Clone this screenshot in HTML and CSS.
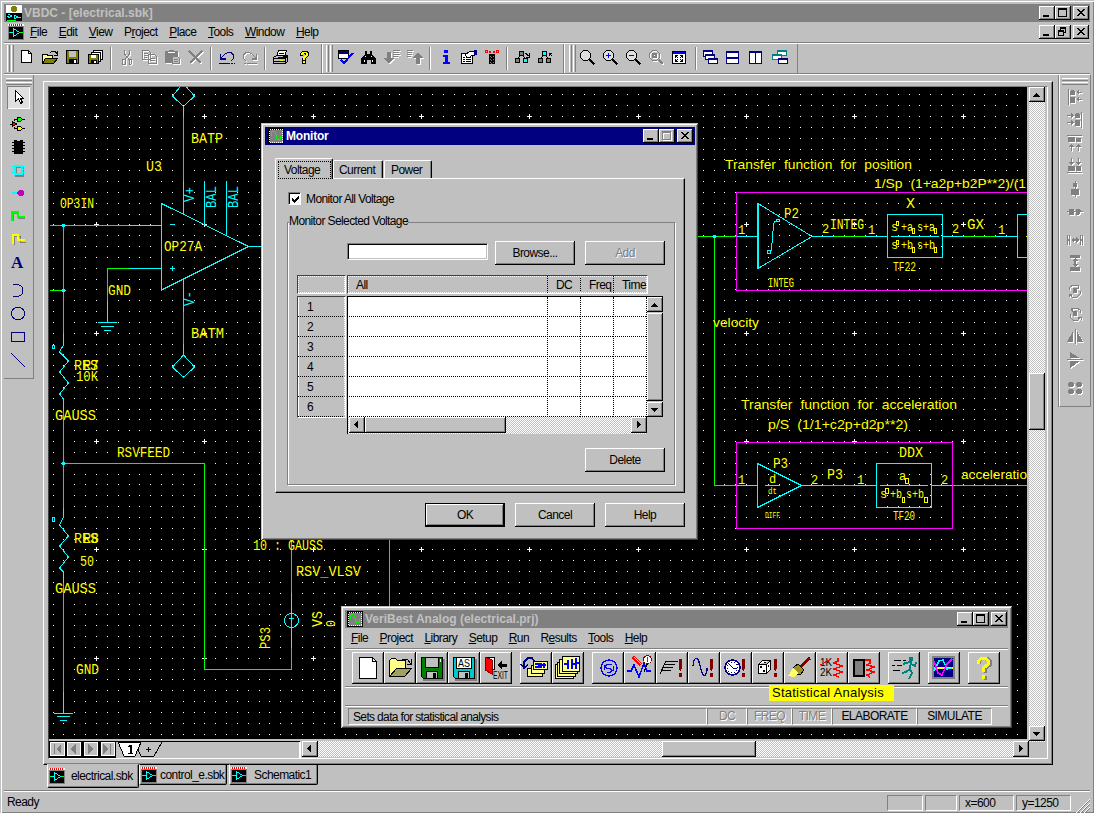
FILE: index.html
```html
<!DOCTYPE html>
<html lang="en">
<head>
<meta charset="utf-8">
<title>VBDC - [electrical.sbk]</title>
<link rel="stylesheet" href="styles.css">
</head>
<body>
<svg class="defs" width="0" height="0">
  <symbol id="min" viewBox="0 0 16 14"><path d="M4 9h6v2H4z"/></symbol>
  <symbol id="max" viewBox="0 0 16 14"><path fill-rule="evenodd" d="M3 2h9v9H3zM4 4v6h7V4z"/></symbol>
  <symbol id="restore" viewBox="0 0 16 14"><path fill-rule="evenodd" d="M5 2h6v6H9v3H3V5h2zM6 4v1h3v2h1V4zM4 7v3h4V7z"/></symbol>
  <symbol id="close" viewBox="0 0 16 14"><path d="M4 3h2v1h1v1h2V4h1V3h2v1h-1v1h-1v1H9v1h1v1h1v1h1v1h-2V9H9V8H7v1H6v1H4V9h1V8h1V7h1V6H6V5H5V4H4z"/></symbol>
  <symbol id="up" viewBox="0 0 14 14"><path d="M6 5h1v1h1v1h1v1h1v1H3V8h1V7h1V6h1z"/></symbol>
  <symbol id="down" viewBox="0 0 14 14"><path d="M3 5h7v1H9v1H8v1H7v1H6V8H5V7H4V6H3z"/></symbol>
  <symbol id="left" viewBox="0 0 14 14"><path d="M8 3v7H7V9H6V8H5V7H4V6h1V5h1V4h1V3z"/></symbol>
  <symbol id="right" viewBox="0 0 14 14"><path d="M5 3v7h1V9h1V8h1V7h1V6H8V5H7V4H6V3z"/></symbol>
  <symbol id="sch" viewBox="0 0 16 16"><path d="M0 0h16v16H0z" fill="#808080"/><path d="M0 0h16v2H0z" fill="#fff"/><path d="M1 0h1v2H1zM3 0h1v2H3zM5 0h1v2H5zM7 0h1v2H7zM9 0h1v2H9zM11 0h1v2h-1zM13 0h1v2h-1z" fill="#f00"/><path d="M1 3h14v12H1z"/><path d="M1 8.500h4M12 8.500h3" stroke="#0f0"/><path d="M5.500 4.500v8l6-4zM2 8.500h3" stroke="#0ff" fill="none"/></symbol>
  <symbol id="wave" viewBox="0 0 16 16"><path d="M0 0h16v16H0z" fill="#000"/><path d="M1.500 1.500h13v13h-13z" fill="#808080" stroke="#fff" stroke-dasharray="1 1"/><path d="M3 4h1v4H3zM4 3h3v1H4zM7 4h1v3H7zM8 7h1v4H8zM9 11h3v1H9zM12 8h1v3h-1z" fill="#0f0"/></symbol>
  <symbol id="glass" viewBox="0 0 16 16"><path d="M3.500.5h4l3 3v4l-3 3h-4l-3-3v-4z" fill="#dfdfdf" stroke="#000"/><path d="M9.500 9.500l5 5" stroke="#000" stroke-width="2.500"/></symbol>
</svg>

<div class="app">
  <header class="titlebar">
    <svg class="ic16" viewBox="0 0 16 16"><path d="M0 0h16v8H0z" fill="#fff"/><path d="M0 8h16v8H0z"/><path d="M6 1h4v1h1v4h-1v1H6V6H5V2h1z" fill="#808000"/><path d="M2 9l4 2-4 2M8 10l4 2-4 2zM1 11h2M12 12h3" stroke="#0ff" fill="none"/><path d="M1 15h9" stroke="#0f0"/></svg>
    <span class="cap main-cap">VBDC - [electrical.sbk]</span>
    <span class="wbtns"><button class="wb"><svg><use href="#min"/></svg></button><button class="wb"><svg><use href="#max"/></svg></button><button class="wb x"><svg><use href="#close"/></svg></button></span>
  </header>
  <nav class="menubar">
    <svg class="ic16" viewBox="0 0 16 16"><use href="#sch"/></svg>
    <span class="items"><span><u>F</u>ile</span><span><u>E</u>dit</span><span><u>V</u>iew</span><span>P<u>r</u>oject</span><span><u>P</u>lace</span><span><u>T</u>ools</span><span><u>W</u>indow</span><span><u>H</u>elp</span></span>
    <span class="wbtns"><button class="wb"><svg><use href="#min"/></svg></button><button class="wb"><svg><use href="#restore"/></svg></button><button class="wb x"><svg><use href="#close"/></svg></button></span>
  </nav>

  <div class="toolbars">
    <div class="tb tb1"><i class="grip"></i>
      <b><svg viewBox="0 0 16 16"><path d="M2.500.5h7l3 3v9h-10z" fill="#fff" stroke="#000"/><path d="M9.500.5v3h3" fill="none" stroke="#000"/></svg></b>
      <b><svg viewBox="0 0 16 16"><path d="M.5 13.500v-9h5v1h5v3" fill="#ff8" stroke="#000"/><path d="M.5 13.500l3-5h12l-4 5z" fill="#808000" stroke="#000"/><path d="M8 3l2-2h3l2 3M15 1v4h-3" fill="none" stroke="#000"/></svg></b>
      <b><svg viewBox="0 0 16 16"><path d="M1.500.5h12v13h-12z" fill="#808000" stroke="#000"/><path d="M4 1h7v6H4z" fill="#c0c0c0"/><path d="M4 9h8v5H4z"/><path d="M9 10h2v3H9z" fill="#fff"/></svg></b>
      <b><svg viewBox="0 0 16 16"><path d="M5.500.5h9v9h-9z" fill="#fff" stroke="#000"/><path d="M3.500 2.500h9v9h-9z" fill="#fff" stroke="#000"/><path d="M.5 4.500h10v9H.500z" fill="#808000" stroke="#000"/><path d="M3 5h5v3H3z" fill="#fff"/><path d="M3 10h6v4H3z"/><path d="M6 11h2v2H6z" fill="#fff"/></svg></b>
      <i class="sep"></i>
      <b class="dis"><svg viewBox="0 0 16 16"><path d="M5.500 0v4l5 6M10.500 0v4l-5 6M4 9h2v5H3v-4zM10 9h2l1 2-1 3h-2z" fill="none" stroke="#808080"/></svg></b>
      <b class="dis"><svg viewBox="0 0 16 16"><path d="M.5.500h6l2 2v7h-8zM6.500 4.500h6l2 2v7h-8zM2 3.500h4M2 5.500h4M2 7.500h3M8 8.500h5M8 10.500h5" fill="none" stroke="#808080"/></svg></b>
      <b class="dis"><svg viewBox="0 0 16 16"><path d="M0 1h4V0h5v1h4v5H7v7H0z" fill="#808080"/><path d="M3 2.500h7" stroke="#fff"/><path d="M7.500 6.500h5l2 2v5h-7zM9 9.500h4M9 11.500h4" fill="#c0c0c0" stroke="#808080"/></svg></b>
      <b class="dis"><svg viewBox="0 0 16 16"><path d="M1 1l12 12M14 1L2 13" stroke="#808080" stroke-width="2" fill="none"/></svg></b>
      <i class="sep"></i>
      <b><svg viewBox="0 0 16 16"><path d="M1.500 4v5h5M2 8l4-4 3-1.500h3l2.500 3v3L12 11" fill="none" stroke="#000080" stroke-width="1.300"/><path d="M0 13.500h11m1 0h2m1 0h1" stroke="#000080"/></svg></b>
      <b class="dis"><svg viewBox="0 0 16 16"><path d="M14.500 4v5h-5M14 8l-4-4-3-1.500H4L1.500 5.500v3L4 11M2 13.500h2m1 0h10" fill="none" stroke="#808080" stroke-width="1.300"/></svg></b>
      <i class="sep"></i>
      <b><svg viewBox="0 0 16 16"><path d="M5.500.5h8l-2 6h-8z" fill="#fff" stroke="#000"/><path d="M.5 7.500l3-2h11v6l-3 2H.500z" fill="#c0c0c0" stroke="#000"/><path d="M0 8.500h12l3-3M0 11.500h12M6 3.500h5M6 5h4M12 8v6" stroke="#000"/><path d="M7 10h3" stroke="#ff0"/></svg></b>
      <b><svg viewBox="0 0 16 16"><path d="M4 6V3l2-2h5l2 2v3l-3 2v3H6V8l3-2V4H7v2zM6 10h4v4H6z"/><path d="M5 5V3l1-1h4l2 1v2L9 8v2H7V7l3-2V4L9 3H8L7 4v1zM7 11h2v2H7z" fill="#ff0"/></svg></b>
    </div>
    <div class="tb tb2"><i class="grip"></i>
      <b><svg viewBox="0 0 16 16"><path d="M.5.500h10v8H.500z" fill="#fff" stroke="#000"/><path d="M1 1h9v3H1z" fill="#000080"/><path d="M3 10l3 3 9-10" fill="none" stroke="#00f" stroke-width="2"/></svg></b>
      <b><svg viewBox="0 0 16 16"><path d="M4 1h2v3h3V1h2v3l4 5v5h-5v-4H6v4H0V9l4-5z"/><path d="M3 10v2M11 10v2M4 6v1M10 6v1" stroke="#fff"/></svg></b>
      <b class="dis"><svg viewBox="0 0 16 16"><path d="M3 2h4v6h3l-5 6-5-6h3z" fill="#808080"/><path d="M9 .5h7M9 2.500h6M9 4.500h7M9 6.500h5" stroke="#808080"/></svg></b>
      <b class="dis"><svg viewBox="0 0 16 16"><path d="M9 14h4V8h3l-5-6-5 6h3z" fill="#808080"/><path d="M0 .5h6M0 2.500h5M0 4.500h5M0 6.500h4" stroke="#808080"/></svg></b>
      <i class="sep"></i>
      <b><svg viewBox="0 0 16 16"><path d="M6 0h4v3H6zM5 5h5v7h2v2H5v-2h2V7H5z" fill="#00f"/></svg></b>
      <b><svg viewBox="0 0 16 16"><path d="M.5 3.500h11v10H.500z" fill="#fff" stroke="#000"/><path d="M2 7.500h2m1 0h5M2 9.500h2m1 0h5M2 11.500h2m1 0h5" stroke="#000"/><path d="M4 5l5-4h5v4l-4 1-2 2-2-1z" fill="#fff" stroke="#000"/><path d="M13 0h3v5h-3z" fill="#000080"/></svg></b>
      <b><svg viewBox="0 0 16 16"><path d="M6 4h4v10H6z" fill="#808080"/><path d="M5.500 14V4h5v10M6 5l4 3-4 3 4 3M10 5L6 8l4 3-4 3" fill="none" stroke="#000"/><path d="M1.500.500h2v2h-2zM12.500.500h2v2h-2z" fill="none" stroke="#f00"/><path d="M5 1h2v2H5zM9 1h2v2H9z" fill="#f00"/></svg></b>
      <i class="sep"></i>
      <b><svg viewBox="0 0 16 16"><path d="M4.500 1.500h4v4h-4zM.5 8.500h4v4h-4z" fill="#808080" stroke="#000"/><path d="M8.500 8.500h4v4h-4z" fill="#0ff" stroke="#000"/><path d="M5 6L3 8M8 6l2 2M10 3l4 3M14 3v4h-3" stroke="#000" fill="none"/></svg></b>
      <b><svg viewBox="0 0 16 16"><path d="M4.500 1.500h4v4h-4z" fill="#0ff" stroke="#000"/><path d="M.5 8.500h4v4h-4zM8.500 8.500h4v4h-4z" fill="#808080" stroke="#000"/><path d="M5 6L3 8M8 6l2 2M14 6l-3-3M11 6V3h3" stroke="#000" fill="none"/></svg></b>
    </div>
    <div class="tb tb3"><i class="grip"></i>
      <b><svg viewBox="0 0 16 16"><use href="#glass"/></svg></b>
      <b><svg viewBox="0 0 16 16"><use href="#glass"/><path d="M3 5.500h5M5.500 3v5" stroke="#00f" stroke-width="1.500"/></svg></b>
      <b><svg viewBox="0 0 16 16"><use href="#glass"/><path d="M3 5.500h5" stroke="#00f" stroke-width="1.500"/></svg></b>
      <b class="dis"><svg viewBox="0 0 16 16"><path d="M3.500.5h4l3 3v4l-3 3h-4l-3-3v-4z" fill="none" stroke="#808080"/><path d="M4 4h3v3H4z" fill="none" stroke="#808080" stroke-width="2"/><path d="M10 10l4 4" stroke="#808080" stroke-width="2"/></svg></b>
      <b><svg viewBox="0 0 16 16"><path d="M.5 1.500h13v12H.5z" fill="#fff" stroke="#000"/><path d="M1 2h12v2H1z" fill="#00f"/><path d="M3.500 8V5.500H6M3.500 5.500L6 8M10.500 8V5.500H8M10.500 5.500L8 8M3.500 9v2.500H6M3.500 11.500L6 9M10.500 9v2.500H8M10.500 11.500L8 9" stroke="#000" fill="none"/></svg></b>
      <i class="sep"></i>
      <b><svg viewBox="0 0 16 16"><g fill="#fff" stroke="#000080"><path d="M.5.500h9v6h-9z"/><path d="M2.500 4.500h9v5h-9z"/><path d="M5.500 8.500h9v5h-9z"/></g><path d="M0 1h10M2 5h10M5 9h10" stroke="#000080" stroke-width="2"/></svg></b>
      <b><svg viewBox="0 0 16 16"><path d="M.5 1.500h12v6H.5zM.5 7.500h12v6H.5z" fill="#fff" stroke="#000080"/><path d="M0 2h13M0 8h13" stroke="#000080" stroke-width="2"/></svg></b>
      <b><svg viewBox="0 0 16 16"><path d="M.5 1.500h6v12h-6zM6.500 1.500h6v12h-6z" fill="#fff" stroke="#000080"/><path d="M0 2h13" stroke="#000080" stroke-width="2"/></svg></b>
      <b><svg viewBox="0 0 16 16"><g fill="#fff" stroke="#008080"><path d="M5.500.500h9v5h-9z"/><path d="M.5 4.500h9v5h-9z"/></g><path d="M5 1h10M0 5h10" stroke="#008080" stroke-width="2"/><path d="M6.500 8.500h9v5h-9z" fill="#fff" stroke="#000080"/><path d="M6 9h10" stroke="#000080" stroke-width="2"/></svg></b>
    </div>
  </div>

  <div class="workspace">
    <aside class="dock dleft"><i class="vgrip"></i><i class="vgrip"></i>
      <b class="pressed"><svg viewBox="0 0 16 16"><path d="M5.500 1.500v11l3-3 2 5 2-1-2-4h3z" fill="#fff" stroke="#000"/></svg></b>
      <b class="g3"><svg viewBox="0 0 16 16"><path d="M7.500 1.500h3l2 2-2 2h-3z" fill="#0f0" stroke="#000"/><path d="M2.500 5.500v5l4-2.500z" fill="#f00" stroke="#000"/><path d="M7.500 10.500h3l2 2-2 2h-3z" fill="#ff0" stroke="#000"/><path d="M13 3.500h2M13 12.500h2M0 8.500h2M4 3.500h3M4 3v2M4 12.500h3M4 11v2" stroke="#000"/></svg></b>
      <b><svg viewBox="0 0 16 16"><path d="M4 1h9v14H4z"/><path d="M2 3.500h13M2 6.500h13M2 9.500h13M2 12.500h13" stroke="#000"/><path d="M7 1h3v1H7z" fill="#c0c0c0"/></svg></b>
      <b><svg viewBox="0 0 16 16"><path d="M5 4h7v9H5z" fill="none" stroke="#808080" stroke-width="2" transform="translate(1 1)"/><path d="M5 4h7v8H5z" fill="none" stroke="#0ff" stroke-width="2"/><path d="M1 4.500h3M1 7.500h3M1 10.500h3M12 4.500h3M12 7.500h3M12 10.500h3" stroke="#0ff" stroke-width="1.500"/></svg></b>
      <b><svg viewBox="0 0 16 16"><path d="M2 8h6" stroke="#0ff" stroke-width="2"/><path d="M9 5h3l2 2v2l-2 2H9L7 9V7z" fill="#c000c0"/></svg></b>
      <b><svg viewBox="0 0 16 16"><path d="M3 13V5h5v5h7" fill="none" stroke="#808080"/><path d="M2 13V4h6v5h7" fill="none" stroke="#0f0" stroke-width="1.500"/></svg></b>
      <b><svg viewBox="0 0 16 16"><path d="M4 14V5h6v6h6" fill="none" stroke="#808080"/><path d="M3 13V4h5v5h7" fill="none" stroke="#ff0" stroke-width="2"/></svg></b>
      <b class="letter">A</b>
      <b class="g4"><svg viewBox="0 0 16 16"><path d="M3 1.500h4c8 1 8 11 0 12H3" fill="none" stroke="#000080"/></svg></b>
      <b><svg viewBox="0 0 16 16"><circle cx="8" cy="7.500" r="6.500" fill="none" stroke="#000080"/></svg></b>
      <b><svg viewBox="0 0 16 16"><path d="M1.500 3.500h13v9h-13z" fill="none" stroke="#000080"/></svg></b>
      <b><svg viewBox="0 0 16 16"><path d="M1 1l14 14" stroke="#000080"/></svg></b>
    </aside>

    <div class="mdi-col">
      <div class="mdi">
        <div class="view">
          <svg class="schematic" viewBox="49 87 978 652">
            <path id="grid" fill="#fff"/>
            <g class="w g">
              <path d="M183.500 117v64M50 225.500h79M63.500 225v108M50 290.500h14M107.500 301v-32.500h22M183.500 312v32M63.500 410v98M63.500 583v109M63.500 463.500h141v206h87V648M291.500 593v-53M389.500 540v67M698 236.500h38M714.500 236v249.500h22M834 236.500h32M964 236.500h32M823 485.500h32M952 485.500h76"/>
            </g>
            <g class="w c">
              <path d="M180 87L172.500 96l11 10.500 11-10.500-8-9M183.500 106v11M183.500 181v33M161.500 203.500l87 43-87 43.500zM248 246.500h14M204.500 181v44M226.500 181v55M129 225.500h32M129 268.500h32M107.500 301v21M98 322.500h19M101 326.500h13M104 330.500h7M183.500 279v33M183.500 344v11l11 12-11 10.500-11-10.500 11-12M170 224.500h5M170 268.500h5M172.500 266v5M52.500 345.500h2v3h-2z"/>
              <path d="M63.500 333v12l-4 7 9 9-9 11 9 11-9 11 4 5v12M63.500 508v9l-4 8 9 11-9 10 9 11-9 11 4 4v11M63.500 692v21M54 713.500h19M57 716.500h13M60 720.500h7M52.500 517.500h2v4h-2zM291.500 593v55M289 618.500h5M736 236.500h22M811 236.500h23M866 236.500h21M887.500 214.500h55v43h-55zM891 236.500h48M942 236.500h22M996 236.500h21M1028 214.500h-10.500v43H1028M758 203.500l54 33-54 32"/>
              <path d="M758 203v66" stroke-width="2"/>
              <path d="M776.500 219.500h3v2h-3zM767.500 250.500h3v3h-3zM776 221q-3 0-3 10l-1.500 18q0 2-2 2M736 485.500h22M757.500 463.500l44 22-44 22zM765 485.500h15M801 485.500h22M855 485.500h21M876.500 463.500h55v44h-55zM880 485.500h48M931 485.500h21"/>
              <circle cx="291.500" cy="620.500" r="7"/>
            </g>
            <path class="w m" d="M1028 192.500H736.500v98H1028M736.500 442.500h216v86h-216z"/>
            <path fill="#0ff" d="M62 224h3v3h-3zM61 225h5v1h-5zM62 289h3v3h-3zM61 290h5v1h-5zM62 462h3v3h-3zM61 463h5v1h-5zM713 235h3v3h-3zM712 236h5v1h-5z"/>
            <g class="s">
              <text x="191" y="143" textLength="32">BATP</text><text x="146" y="171" textLength="16">U3</text><text x="60" y="208" textLength="34">OP3IN</text><text x="164" y="251" textLength="38">OP27A</text><text x="108" y="295" textLength="23">GND</text><text x="191" y="338" textLength="33">BATM</text>
              <text x="74" y="370" textLength="24">RES</text><text x="83" y="370" textLength="16">R7</text><text x="76" y="381" textLength="22">10K</text><text x="55" y="420" textLength="41">GAUSS</text><text x="117" y="457" textLength="53">RSVFEED</text><text x="74" y="543" textLength="24">RES</text><text x="83" y="543" textLength="16">R8</text><text x="80" y="566" textLength="14">50</text><text x="55" y="593" textLength="41">GAUSS</text><text x="76" y="674" textLength="23">GND</text><text x="253" y="550" textLength="70">10 : GAUSS</text><text x="296" y="576" textLength="65">RSV_VLSV</text>
              <text transform="translate(322 627)rotate(-90)" textLength="16">VS</text><text transform="translate(335 627)rotate(-90)" textLength="7" font-size="13">0</text><text transform="translate(270 649)rotate(-90)" textLength="22">PS3</text>
              <text x="906" y="208" textLength="9">X</text><text x="784" y="218" textLength="15">P2</text><text x="830" y="229" textLength="34">INTEG</text><text x="967" y="229" textLength="17">GX</text>
              <text x="899" y="457" textLength="24">DDX</text><text x="773" y="468" textLength="15">P3</text><text x="827" y="479" textLength="16">P3</text>
            </g>
            <g class="s note">
              <text x="725" y="169" textLength="187">Transfer function for position</text><text x="874" y="188" textLength="152">1/Sp (1+a2p+b2P**2)/(1</text><text x="713" y="327" textLength="46">velocity</text><text x="741" y="409" textLength="216">Transfer function for acceleration</text><text x="768" y="429" textLength="140">p/S (1/1+c2p+d2p**2)</text><text x="961" y="479" textLength="66">acceleratio</text>
            </g>
            <g class="s small">
              <text x="738" y="234">1</text><text x="822" y="233">2</text><text x="868" y="234">1</text><text x="952" y="233">2</text><text x="998" y="234">1</text><text x="738" y="484">1</text><text x="811" y="484">2</text><text x="857" y="484">1</text><text x="941" y="484">2</text>
              <text x="893" y="271" textLength="23">TF22</text><text x="893" y="520" textLength="22">TF20</text><text x="768" y="287" textLength="26">INTEG</text><text x="765" y="518" textLength="15" class="tiny">DIFF</text><text x="769" y="483">d</text><text x="768" y="494" textLength="9" class="tiny">dt</text>
              <text x="891" y="231">s</text><text x="901" y="231" textLength="12">+a</text><text x="917" y="231" textLength="18">s+a</text>
              <text x="891" y="249">s</text><text x="901" y="249" textLength="12">+b</text><text x="917" y="249" textLength="18">s+b</text>
              <text x="899" y="480">a</text><text x="880" y="498">s</text><text x="890" y="498" textLength="12">+b</text><text x="906" y="498" textLength="18">s+b</text>
            </g>
            <path fill="none" stroke="#ff0" d="M896.500 221.500h2v4h-2zM912.500 228.500h2v5h-2zM934.500 228.500h2v5h-2zM896.500 240.500h2v4h-2zM912.500 247.500h2v5h-2zM934.500 247.500h2v5h-2zM905.500 478.500h3v5h-3zM885.500 488.500h3v5h-3zM902.500 497.500h2v5h-2zM924.500 497.500h3v5h-3zM1026 236.500h1"/>
            <g class="s cy"><text transform="translate(216 208)rotate(-90)" textLength="22">BAL</text><text transform="translate(238 208)rotate(-90)" textLength="22">BAL</text><text transform="translate(194 202)rotate(-90)" textLength="15">V+</text><text transform="translate(194 306)rotate(-90)" textLength="15">V-</text></g>
          </svg>
          <div class="vscroll"><button class="sb"><svg><use href="#up"/></svg></button><i class="thumb"></i><button class="sb"><svg><use href="#down"/></svg></button></div>
          <div class="sheetbar">
            <svg class="sheets" width="253" height="17" viewBox="0 0 253 17">
              <path d="M0 0h67v17H0z" fill="#000"/><g fill="#c0c0c0" stroke="#fff"><path d="M1.500 1.500h14v13h-14z"/><path d="M18.500 1.500h13v13h-13z"/><path d="M35.500 1.500h13v13h-13z"/><path d="M52.500 1.500h13v13h-13z"/></g>
              <g fill="#808080"><path d="M5 3h1v10H5zM12 3v10L7 8zM27 3v10l-6-5zM39 3v10l6-5zM54 3v10l6-5zM61 3h1v10h-1z"/></g>
              <path d="M67 0h184v1H67z" fill="#000"/><path d="M69 1l6 14h11l6-14z" fill="#fff" stroke="#000"/><path d="M92 1l-3 8 3 6h13l8-14" fill="none" stroke="#000"/><path d="M97 8.500h5M99.500 6v5" stroke="#000"/><path d="M79 5h1V4h3v8h1v1h-5v-1h2V6h-2z"/><path d="M250 1h2v16h-2z" fill="#fff"/>
            </svg>
            <div class="hscroll"><button class="sb"><svg><use href="#left"/></svg></button><i class="thumb"></i><button class="sb"><svg><use href="#right"/></svg></button></div>
          </div>
        </div>
      </div>
      <div class="doctabs">
        <span class="dt on"><svg class="ic16"><use href="#sch"/></svg>electrical.sbk</span><span class="dt t2"><svg class="ic16"><use href="#sch"/></svg>control_e.sbk</span><span class="dt t3"><svg class="ic16"><use href="#sch"/></svg>Schematic1</span>
      </div>
    </div>

    <aside class="dock dright"><i class="vgrip"></i><i class="vgrip"></i>
      <b><svg viewBox="0 0 16 16"><path d="M1.500 0v16" stroke="#808080"/><path d="M3 2h1V1h3v1h1v4H3zM3 8h5v6H3zM9 3l3-2v1.500h3v1h-3V6zM9 10l3-2v1.500h3v1h-3V13z"/></svg></b>
      <b><svg viewBox="0 0 16 16"><path d="M14.500 0v16" stroke="#808080"/><path d="M8 2h1V1h3v1h1v4H8zM8 8h5v6H8zM7 3L4 1v1.500H0v1h4V6zM7 10L4 8v1.500H0v1h4V13z"/></svg></b>
      <b><svg viewBox="0 0 16 16"><path d="M0 .5h15" stroke="#808080"/><path d="M1 2h7v5H1zM9 3h5v4H9zM4 9l3 3H5v4H4v-4H2zM11 9l3 3h-2v4h-1v-4H9z"/></svg></b>
      <b><svg viewBox="0 0 16 16"><path d="M0 14.500h15" stroke="#808080"/><path d="M1 8h7v5H1zM9 8h5v5H9zM4 7l3-3H5V0H4v4H2zM11 7l3-3h-2V0h-1v4H9z"/></svg></b>
      <b><svg viewBox="0 0 16 16"><path d="M8 0v16" stroke="#808080"/><path d="M6 2h4v4H6zM4 8h8v6H4z"/></svg></b>
      <b><svg viewBox="0 0 16 16"><path d="M0 7.500h16" stroke="#808080"/><path d="M2 5h5v6H2zM9 5h3l2 2-2 4H9z"/></svg></b>
      <b class="g5"><svg viewBox="0 0 16 16"><path d="M0 3h1v4h1V3h1v10H2V9H1v4H0zM13 3h1v4h1V3h1v10h-1V9h-1v4h-1zM4 8l3-3v2h2V5l3 3-3 3V9H7v2z"/></svg></b>
      <b><svg viewBox="0 0 16 16"><path d="M3 0h10v3H3zM3 12h10v4H3zM8 3l3 3H9v3h2l-3 3-3-3h2V6H5z"/></svg></b>
      <b class="g5"><svg viewBox="0 0 16 16"><path d="M6 5h4v5H6z"/><path d="M2 7l1-3 3-2h5l1 3M3 11l2 3h5l3-3V8M11 2v3H8M5 11H2v3" fill="none" stroke="#808080"/></svg></b>
      <b><svg viewBox="0 0 16 16"><path d="M6 5h4v5H6z"/><path d="M14 7l-1-3-3-2H5L4 5M13 11l-2 3H6l-3-3V8M5 2v3h3M11 11h3v3" fill="none" stroke="#808080"/></svg></b>
      <b><svg viewBox="0 0 16 16"><path d="M6 2v11H0zM10 2v11h6zM7.500 0h1v15h-1z"/></svg></b>
      <b><svg viewBox="0 0 16 16"><path d="M3 0v6h10zM3 9v7l10-7zM0 7h16v1H0z"/></svg></b>
      <b class="g5"><svg viewBox="0 0 16 16"><path d="M2 2h4l1 2v1L6 7H2L1 5V4zM10 2h4l1 2v1l-1 2h-4L9 5V4zM2 9h4l1 2v1l-1 2H2l-1-2v-1zM10 9h4l1 2v1l-1 2h-4l-1-2v-1z"/></svg></b>
    </aside>
  </div>

  <footer class="status"><span class="ready">Ready</span><i class="p p1"></i><i class="p p2"></i><span class="p p3">x=600</span><span class="p p4">y=1250</span><svg width="14" height="14" viewBox="0 0 14 14"><path d="M1 14L14 1M5 14l9-9M9 14l5-5" stroke="#808080"/><path d="M0 14L14 0M4 14L14 4M8 14l6-6" stroke="#fff"/></svg></footer>
</div>

<section class="win monitor">
  <header class="titlebar on"><svg class="ic16"><use href="#wave"/></svg><span class="cap mon-cap">Monitor</span>
    <span class="wbtns"><button class="wb"><svg><use href="#min"/></svg></button><button class="wb off"><svg><use href="#max"/></svg></button><button class="wb x"><svg><use href="#close"/></svg></button></span></header>
  <div class="mtabs"><span class="mt on"><em>Voltage</em></span><span class="mt cur">Current</span><span class="mt pow">Power</span></div>
  <div class="page">
    <label class="chk"><i><svg width="9" height="9" viewBox="0 0 9 9"><path d="M1 3l2 2 5-4v2L3 8 1 6z"/></svg></i>Monitor All Voltage</label>
    <fieldset class="group"><legend>Monitor Selected Voltage</legend>
      <div class="frow"><i class="input"></i><button class="btn">Browse...</button><button class="btn dim">Add</button></div>
      <div class="table">
        <div class="hcell corner"></div>
        <div class="hcell cols"><span>All</span><span>DC</span><span>Freq</span><span>Time</span></div>
        <div class="rows"><span>1</span><span>2</span><span>3</span><span>4</span><span>5</span><span>6</span></div>
        <div class="body">
          <div class="cells"><i></i><i></i><i></i><i></i></div>
          <div class="vscroll in"><button class="sb"><svg><use href="#up"/></svg></button><i class="thumb"></i><button class="sb"><svg><use href="#down"/></svg></button></div>
          <div class="hscroll in"><button class="sb"><svg><use href="#left"/></svg></button><i class="thumb"></i><button class="sb"><svg><use href="#right"/></svg></button></div>
        </div>
      </div>
      <button class="btn del">Delete</button>
    </fieldset>
  </div>
  <div class="actions"><button class="btn def">OK</button><button class="btn">Cancel</button><button class="btn">Help</button></div>
</section>

<section class="win analog">
  <header class="titlebar"><svg class="ic16"><use href="#wave"/></svg><span class="cap an-cap">VeriBest Analog (electrical.prj)</span>
    <span class="wbtns"><button class="wb"><svg><use href="#min"/></svg></button><button class="wb"><svg><use href="#max"/></svg></button><button class="wb x"><svg><use href="#close"/></svg></button></span></header>
  <nav class="amenu"><span><u>F</u>ile</span><span><u>P</u>roject</span><span><u>L</u>ibrary</span><span><u>S</u>etup</span><span><u>R</u>un</span><span>R<u>e</u>sults</span><span><u>T</u>ools</span><span><u>H</u>elp</span></nav>
  <div class="atools">
    <b><svg viewBox="0 0 32 32"><path d="M7.500 5.500h13l4 4v17h-17z" fill="#fff" stroke="#000"/><path d="M20.500 5.500v4h4" fill="none" stroke="#000"/></svg></b>
    <b><svg viewBox="0 0 32 32"><path d="M5.500 24.500v-16l2-2h4l2 2h8v8" fill="#ff8" stroke="#000"/><path d="M5.500 24.500l7-8h15l-7 8z" fill="#a0a060" stroke="#000"/><path d="M17 9l3-2h3l4 5M27 7v5h-4" fill="none" stroke="#000"/></svg></b>
    <b><svg viewBox="0 0 32 32"><path d="M7 28h21V7" stroke="#808080" stroke-width="2" fill="none"/><path d="M5.500 5.500h21v21h-19l-2-2z" fill="#008000" stroke="#000"/><path d="M9.500 5.500h13v10h-13zM10.500 19.500h11v7h-11z" fill="#c0c0c0" stroke="#000"/><path d="M17 21h3v5h-3z" fill="#000"/><path d="M24 7h1v3h-1z" fill="#fff"/></svg></b>
    <b><svg viewBox="0 0 32 32"><path d="M7 28h21V7" stroke="#808080" stroke-width="2" fill="none"/><path d="M5.500 5.500h21v21h-19l-2-2z" fill="#00c8c8" stroke="#000"/><path d="M8.500 5.500h15v11h-15z" fill="#fff" stroke="#000"/><path d="M10.500 19.500h11v7h-11z" fill="#c0c0c0" stroke="#000"/><path d="M17 21h3v5h-3z"/><text x="10" y="15" font-size="10" textLength="12">AS</text></svg></b>
    <b><svg viewBox="0 0 32 32"><path d="M5.500 5.500h9v12h-9z" fill="#fff" stroke="#000"/><path d="M5 5l7 3v14l-7-4z" fill="#f00" stroke="#800000"/><path d="M17 13l5-4v3h5v3h-5v2z"/><text x="13" y="27" font-size="10" textLength="15">EXIT</text></svg></b>
    <b class="gp"><svg viewBox="0 0 32 32"><g fill="#ff8" stroke="#000"><path d="M7.500 16.500h15v8h-15z"/><path d="M11.500 13.500h13v8h-13z"/><path d="M13.500 9.500h14v8h-14z"/></g><path d="M15 12h4v3h-4M21 11v5M24 11v5M21 13h5" stroke="#00f" fill="none" stroke-width="1.500"/><path d="M4 16V10l4-4h4l2 3M1 12l3 4 4-3" fill="none" stroke="#000080" stroke-width="1.500"/></svg></b>
    <b><svg viewBox="0 0 32 32"><g fill="#ff8" stroke="#000"><path d="M3.500 12.500h18v14h-18z"/><path d="M5.500 10.500h18v14h-18z"/><path d="M7.500 7.500h18v14h-18z"/><path d="M10.500 4.500h17v15h-17z"/></g><path d="M12 12h4V8M16 8v9M20 7v10M24 6v5h3M20 12h4v5" stroke="#00f" fill="none" stroke-width="2"/></svg></b>
    <b class="gp"><svg viewBox="0 0 32 32"><circle cx="17" cy="16" r="8" fill="none" stroke="#00f" stroke-width="1.500"/><path d="M19.500 12.500h-5l-1 2 1 2h4l1.500 2-1.500 2h-4M12.500 18v-5M21.500 14v5" fill="none" stroke="#00f" stroke-width="1.300"/></svg></b>
    <b><svg viewBox="0 0 32 32"><path d="M3 19h4l3-6 5 12 5-14 3 8h4" fill="none" stroke="#00f" stroke-width="1.500"/><path d="M9 5l8 8" stroke="#f00" stroke-width="3.500"/><path d="M10 5l8 8" stroke="#ff0" stroke-width="1"/><path d="M20 20l4-10" stroke="#000"/><circle cx="23.500" cy="7.500" r="4" fill="#fff" stroke="#800000"/><path d="M23 5h1v5h-1z" fill="#f00"/></svg></b>
    <b><svg viewBox="0 0 32 32"><path d="M4 22l6-13M10 9.500h12M9 12.500h10M8 15.500h9M6 18.500h9" stroke="#000"/><path d="M23 7h3v9l-1 3h-1l-1-3zM23 21h3v4h-3z" fill="#800000"/></svg></b>
    <b><svg viewBox="0 0 32 32"><path d="M5 14c1-10 5-9 6-4l3 11c2 5 5 2 5-5" fill="none" stroke="#000080" stroke-width="1.300"/><path d="M22 7h3v9l-1 3h-1l-1-3zM22 21h3v4h-3z" fill="#800000"/></svg></b>
    <b><svg viewBox="0 0 32 32"><circle cx="12.500" cy="15.500" r="7.500" fill="#fff" stroke="#000080" stroke-width="1.500"/><circle cx="12.500" cy="15.500" r="5.500" fill="none" stroke="#000080" stroke-dasharray="1 2"/><path d="M9 12l4 4h4" stroke="#000080" fill="none"/><path d="M22 7h3v9l-1 3h-1l-1-3zM22 21h3v4h-3z" fill="#800000"/></svg></b>
    <b><svg viewBox="0 0 32 32"><path d="M6.500 12.500l4-4h8v9l-4 4h-8zM6.500 12.500h8l4-4M14.500 12.500v9" fill="#fff" stroke="#000"/><path d="M8 14h2v2H8zM11 18h2v2h-2zM16 13h1v2h-1zM12 10h2v1h-2z"/><path d="M22 7h3v9l-1 3h-1l-1-3zM22 21h3v4h-3z" fill="#800000"/></svg></b>
    <b><svg viewBox="0 0 32 32"><path d="M16 15l10-9" stroke="#800000" stroke-width="3"/><path d="M10 15l4-3 6 6-3 4-3 1-5-5z" fill="#a09020" stroke="#000"/><path d="M4 24l5-8 6 5-5 4z" fill="#ff6"/></svg></b>
    <b><svg viewBox="0 0 32 32"><text x="4" y="14" font-size="10" textLength="12">1K</text><text x="4" y="24" font-size="10" textLength="12">2K</text><path d="M4 13l11-6" stroke="#f00"/><path d="M22 6v3l-4 2 8 3-8 3 8 3-8 3 5 2" stroke="#f00" stroke-width="1.500" fill="none"/></svg></b>
    <b><svg viewBox="0 0 32 32"><path d="M17 8h5v3l-3 2 7 2-7 3 7 2-7 3 3 2" stroke="#f00" stroke-width="1.500" fill="none"/><path d="M6 8h10v16H6z" fill="#808080" stroke="#000" stroke-width="2"/></svg></b>
    <b class="gp"><svg viewBox="0 0 32 32"><path d="M6 8.500h7m2 0h3M4 13.500h3m2 0h5M5 18.500h7" stroke="#000"/><path d="M21 5h4v4h-4z" fill="#008080"/><path d="M17 11l6-1-1 7 2 4-3 6M22 17l-4 3-4 1M16 13l1-3M23 12l4 2 1-4" fill="none" stroke="#008080" stroke-width="2"/></svg></b>
    <b class="gp"><svg viewBox="0 0 32 32"><path d="M4 4h23v23H4z" fill="#808080"/><path d="M6 6h19v19H6z" fill="#000080"/><path d="M6 16h19" stroke="#ff0" stroke-width="1.500"/><path d="M6 19l5-10 4-1 4 9 5-1" stroke="#0ff" fill="none" stroke-width="1.500"/><path d="M6 9l4 12 4 2 5-11 5-5" stroke="#f0f" fill="none" stroke-width="1.500"/></svg></b>
    <b class="gp"><svg viewBox="0 0 32 32"><path d="M11 12V9l3-3h5l3 3v4l-5 4v4M17 24v4" fill="none" stroke="#808080" stroke-width="3"/><path d="M10.500 11.500V9l3-3h4l3 3v3l-5 4v4M15.500 23v4" fill="none" stroke="#ff0" stroke-width="3"/></svg></b>
  </div>
  <div class="aline"></div>
  <div class="astat"><span class="sf">Sets data for statistical analysis</span><span class="d w40">DC</span><span class="d w45">FREQ</span><span class="d w40">TIME</span><span class="w85">ELABORATE</span><span class="w75">SIMULATE</span></div>
  <div class="tip">Statistical Analysis</div>
</section>
<script src="schematic.js"></script>
</body>
</html>
```
FILE: schematic.js
```js
// Draws the schematic's snap grid: a dot per step, a cross every tenth step.
(function () {
  var step = 10.835, d = '';
  for (var i = -4; i < 87; i++) {
    for (var j = -2; j < 58; j++) {
      var x = Math.floor(96.5 + step * i), y = Math.floor(116.5 + step * j);
      if (i % 10 === 0 && j % 10 === 0) {
        d += 'M' + (x - 2) + ' ' + y + 'h5v1h-5zM' + x + ' ' + (y - 2) + 'h1v5h-1z';
      } else {
        d += 'M' + x + ' ' + y + 'h1v1h-1z';
      }
    }
  }
  document.getElementById('grid').setAttribute('d', d);

  // Labels are condensed to their drawn width, glyphs included.
  document.querySelectorAll('text[textLength]').forEach(function (t) {
    t.setAttribute('lengthAdjust', 'spacingAndGlyphs');
  });
})();
```
FILE: styles.css
```css
* { box-sizing: border-box; }
body { margin: 0; width: 1094px; height: 813px; overflow: hidden; background: #c0c0c0; font: 12px/14px "Liberation Sans", Arial, sans-serif; letter-spacing: -0.55px; color: #000; }
svg { display: block; shape-rendering: crispEdges; flex: none; }
.defs { position: absolute; }
button { font: inherit; letter-spacing: inherit; color: inherit; padding: 0; border: 0; background: #c0c0c0; display: block; flex: none; }
i, b, em { font-style: normal; font-weight: normal; }
.ic16 { width: 16px; height: 16px; }
u { text-underline-offset: 1px; text-decoration-thickness: 1px; text-decoration-skip-ink: none; }

.app { width: 1094px; height: 813px; padding: 4px 4px 0; display: flex; flex-direction: column; box-shadow: inset 1px 1px #c0c0c0, inset 2px 2px #fff, inset -1px -1px #808080; }
.titlebar { height: 18px; background: #808080; color: #c0c0c0; display: flex; align-items: center; padding: 0 1px 0 2px; flex: none; }
.titlebar.on { background: #000080; color: #fff; }
.cap { font-weight: bold; font-size: 12px; margin-left: 2px; letter-spacing: 0; white-space: nowrap; }
.mon-cap { letter-spacing: -0.2px; }
.wbtns { display: flex; margin-left: auto; }
.wb { width: 16px; height: 14px; box-shadow: inset -1px -1px #000, inset 1px 1px #fff, inset -2px -2px #808080; }
.wb svg { width: 16px; height: 14px; }
.wb.x { margin-left: 2px; }
.wb.off svg { fill: #808080; filter: drop-shadow(1px 1px 0 #fff); }
.menubar { height: 20px; display: flex; align-items: center; padding: 0 1px 0 4px; flex: none; }
.items { display: flex; gap: 11.6px; margin-left: 6px; }
.toolbars { height: 33px; display: flex; flex: none; border-top: 1px solid #808080; border-bottom: 1px solid #fff; box-shadow: inset 0 1px #fff, inset 0 -1px #808080; padding: 1px 0; }
.tb { display: flex; align-items: center; border-right: 1px solid #808080; }
.tb1 { width: 318px; padding-left: 3px; }
.tb2 { width: 242px; padding-left: 3px; border-left: 1px solid #fff; }
.tb3 { width: 234px; padding-left: 4px; border-left: 1px solid #fff; }
.tb b { width: 23px; display: flex; padding: 0 0 1px 4px; flex: none; }
.tb3 b { padding-left: 3px; }
.tb svg, .dock svg { width: 16px; height: 16px; }
.dis svg { filter: drop-shadow(1px 1px 0 #fff); }
.grip { width: 7px; height: 27px; margin-right: 1px; flex: none; background: linear-gradient(90deg, #fff 1px, #c0c0c0 1px 2px, #808080 2px 3px, #c0c0c0 3px 4px, #fff 4px 5px, #c0c0c0 5px 6px, #808080 6px); }
.sep { width: 8px; height: 23px; flex: none; background: linear-gradient(90deg, transparent 3px, #808080 3px 4px, #fff 4px 5px, transparent 5px); }

.workspace { height: 715px; display: flex; flex: none; }
.dock { flex: none; display: flex; flex-direction: column; align-items: center; padding-top: 3px; }
.dleft { width: 30px; height: 304px; border-right: 1px solid #808080; border-bottom: 1px solid #808080; }
.dright { width: 32px; height: 332px; border-left: 1px solid #fff; border-right: 1px solid #808080; border-bottom: 1px solid #808080; margin-left: 6px; box-shadow: -1px 0 #808080; }
.vgrip { width: 26px; height: 3px; border-top: 1px solid #fff; border-bottom: 1px solid #808080; margin-bottom: 1px; flex: none; }
.dock b { width: 23px; height: 23px; display: flex; align-items: center; padding: 0 0 1px 3px; flex: none; }
.dright b svg { filter: drop-shadow(1px 1px 0 #fff); fill: #808080; }
.pressed { background: #dfdfdf; box-shadow: inset 1px 1px #808080, inset -1px -1px #fff; }
.dock .g3 { margin-top: 4px; }
.dock .g4 { margin-top: 6px; }
.dock .g5 { margin-top: 5px; }
.dock .letter { font: bold 17px "Liberation Serif", serif; color: #000080; padding: 1px 0 0 4px; }

.mdi-col { width: 1010px; margin-left: 9px; padding-top: 6px; }
.mdi { height: 684px; padding: 4px; border: 1px solid; border-color: #fff #000 #000 #fff; box-shadow: inset -1px -1px #808080; }
.view { width: 1000px; height: 673px; border-top: 1px solid #808080; border-left: 1px solid #404040; border-bottom: 1px solid #fff; border-right: 1px solid #fff; display: grid; grid-template-columns: 978px 20px; grid-template-rows: 652px 19px; }
.schematic { width: 978px; height: 652px; background: #000; overflow: hidden; }
.w { fill: none; stroke-width: 1; }
.g { stroke: #0f0; }
.c { stroke: #0ff; }
.m { stroke: #f0f; }
.s { fill: #ff0; font-family: "Liberation Mono", monospace; font-size: 15px; letter-spacing: 0; white-space: pre; }
.note { font-family: "Liberation Sans", sans-serif; font-size: 13.5px; word-spacing: 4px; }
.small { font-size: 12px; }
.tiny { font-size: 9px; }
.cy { fill: #0ff; }

.vscroll, .hscroll { background: repeating-conic-gradient(#fff 0 25%, #c0c0c0 0 50%) 0 0 / 2px 2px; display: flex; }
.vscroll { flex-direction: column; width: 16px; height: 655px; margin-left: 2px; grid-column: 2; }
.sb { width: 16px; height: 15px; box-shadow: inset -1px -1px #000, inset 1px 1px #fff, inset -2px -2px #808080; }
.sb svg { width: 14px; height: 14px; margin: 0 0 0 1px; }
.thumb { background: #c0c0c0; box-shadow: inset -1px -1px #000, inset 1px 1px #fff, inset -2px -2px #808080; }
.vscroll .thumb { height: 57px; margin-top: 271px; margin-bottom: 296px; flex: none; }
.sheetbar { grid-column: 1 / 3; grid-row: 2; display: flex; padding-top: 2px; width: 980px; }
.sheetbar .hscroll { width: 727px; height: 16px; }
.hscroll .thumb { width: 94px; height: 16px; margin-left: 344px; flex: none; }
.hscroll .sb { height: 16px; }
.hscroll .sb:last-child { margin-left: auto; }

.doctabs { display: flex; align-items: flex-start; padding-left: 4px; margin-top: -1px; }
.dt { height: 21px; width: 88px; padding: 0 0 0 1px; display: flex; align-items: center; border: 1px solid; border-color: #000 #000 #000 #fff; box-shadow: inset -1px -1px #808080; border-radius: 0 0 2px 2px; white-space: nowrap; }
.dt.on { width: 92px; height: 24px; border-top-color: #c0c0c0; background: #c0c0c0; padding: 0 0 0 1px; }
.dt .ic16 { margin-right: 3px; }
.dt.on .ic16 { margin-right: 6px; }
.t3 { width: 89px; margin-left: 2px; padding-left: 1px; }
.t3 .ic16 { margin-right: 7px; }

.status { height: 23px; border-top: 1px solid #808080; box-shadow: inset 0 1px #fff; display: flex; padding-top: 4px; flex: none; }
.ready { margin-left: 3px; width: 882px; line-height: 15px; }
.status .p { height: 16px; border: 1px solid; border-color: #808080 #fff #fff #808080; margin-right: 2px; padding-left: 5px; flex: none; }
.p1 { width: 36px; }
.p2 { width: 32px; }
.p3, .p4 { width: 55px; }
.status svg { margin: 4px 0 0 3px; }

.win { position: absolute; background: #c0c0c0; box-shadow: inset 1px 1px #c0c0c0, inset -1px -1px #404040, inset 2px 2px #fff, inset -2px -2px #808080; padding: 4px; }
.monitor { left: 261px; top: 123px; width: 437px; height: 417px; padding-right: 3px; }
.monitor .titlebar { padding: 0 2px 0 3px; }
.mtabs { display: flex; align-items: flex-end; height: 20px; margin: 13px 0 0 10px; }
.mt { height: 18px; border: 1px solid; border-color: #fff #000 transparent #fff; border-bottom: 0; box-shadow: inset -1px 0 #808080; border-radius: 2px 2px 0 0; padding: 2px 0 0 5px; width: 51px; }
.mt.on { width: 58px; height: 21px; margin-bottom: -1px; background: #c0c0c0; padding: 2px 0 0 2px; z-index: 1; }
.mt.on em { display: block; width: 53px; height: 18px; border: 1px dotted #000; padding: 1px 0 0 5px; }
.mt.cur { width: 50px; }
.mt.pow { width: 48px; margin-left: 1px; padding-left: 6px; }
.page { margin-left: 10px; width: 410px; height: 315px; border: 1px solid; border-color: #fff #000 #000 #fff; box-shadow: inset -1px -1px #808080; padding: 13px 0 0 12px; }
.chk { display: flex; height: 14px; letter-spacing: -0.6px; }
.chk i { width: 13px; height: 13px; background: #fff; border: 1px solid; border-color: #808080 #fff #fff #808080; box-shadow: inset 1px 1px #000; margin-right: 5px; padding: 2px; }
.group { margin: 8px 0 0 -1px; padding: 0; border: 1px solid #808080; width: 388px; height: 271px; box-shadow: 1px 1px #fff, inset 1px 0 #fff; }
.group legend { padding: 0; margin-left: 1px; height: 16px; letter-spacing: -0.6px; }
.frow { display: flex; margin: 11px 0 0 59px; align-items: flex-start; }
.input { width: 141px; height: 17px; margin: 2px 7px 0 0; background: #fff; border: 1px solid; border-color: #808080 #fff #fff #808080; box-shadow: inset 1px 1px #000, inset -1px -1px #c0c0c0; }
.btn { width: 80px; height: 24px; line-height: 22px; text-align: center; box-shadow: inset -1px -1px #000, inset 1px 1px #fff, inset -2px -2px #808080; margin-right: 10px; }
.dim { color: #808080; text-shadow: 1px 1px #fff; margin: 0; }
.def { border: 1px solid #000; line-height: 20px; }
.table { display: grid; grid-template-columns: 50px 316px; grid-template-rows: 21px 142px; margin: 10px 0 0 9px; }
.hcell { border: 1px solid; border-color: #404040 #fff #fff #404040; height: 19px; width: 49px; outline: 1px dotted #fff; outline-offset: -2px; }
.cols { width: 301px; display: grid; grid-template-columns: 200px 33px 33px 33px; }
.cols span { border-right: 1px dotted #000; padding: 2px 0 0 8px; white-space: nowrap; }
.rows { width: 49px; height: 122px; border: 1px solid; border-color: #404040 #fff #fff #404040; }
.rows span { display: block; height: 20px; border-bottom: 1px dotted #000; padding: 3px 0 0 9px; box-shadow: inset 1px 0 #fff; border-right: 1px dotted #fff; }
.body { width: 316px; height: 138px; display: grid; grid-template-columns: 299px 16px; grid-template-rows: 120px 17px; border-left: 1px solid #000; border-top: 1px solid #000; }
.cells { display: grid; grid-template-columns: 200px 33px 33px 33px; background: #fff; }
.cells i { border-right: 1px dotted #000; height: 120px; background: repeating-linear-gradient(90deg, #fff 0 1px, transparent 1px 2px), repeating-linear-gradient(#fff 0 19px, #000 19px 20px); }
.vscroll.in { height: 120px; margin: 0; width: 16px; background: #c0c0c0; }
.vscroll.in .thumb { height: 88px; margin: 1px 0; }
.hscroll.in { width: 299px; padding-left: 1px; }
.hscroll.in .thumb { width: 141px; height: 16px; margin: 0; }
.del { margin: 10px 0 0 297px; }
.actions { display: flex; margin: 10px 0 0 160px; }

.analog { left: 341px; top: 606px; width: 671px; height: 122px; }
.amenu { display: flex; gap: 11.4px; padding: 3px 0 0 6px; height: 20px; }
.atools { height: 39px; display: flex; border-top: 1px solid #808080; border-bottom: 1px solid #808080; box-shadow: inset 0 1px #fff, 0 1px #fff; padding: 3px 0 0 7px; }
.atools b { width: 32px; height: 32px; box-shadow: inset -1px -1px #000, inset 1px 1px #fff, inset -2px -2px #808080; flex: none; }
.atools .gp { margin-left: 8px; }
.atools svg { width: 32px; height: 32px; letter-spacing: 0; }
.aline { height: 20px; border-bottom: 1px solid #fff; box-shadow: inset 0 -1px #808080; }
.astat { display: flex; padding: 1px 0 0 3px; }
.astat span { height: 17px; border: 1px solid; border-color: #808080 #fff #fff #808080; text-align: center; white-space: nowrap; }
.astat .sf { width: 359px; text-align: left; padding: 1px 0 0 4px; letter-spacing: -0.65px; }
.d { color: #808080; text-shadow: 1px 1px #fff; }
.w40 { width: 40px; }
.w45 { width: 45px; }
.w85 { width: 85px; }
.w75 { width: 75px; }
.tip { position: absolute; left: 428px; top: 79px; width: 125px; height: 16px; background: #ff0; font-size: 13px; line-height: 16px; padding-left: 3px; letter-spacing: 0.25px; white-space: nowrap; }
```
